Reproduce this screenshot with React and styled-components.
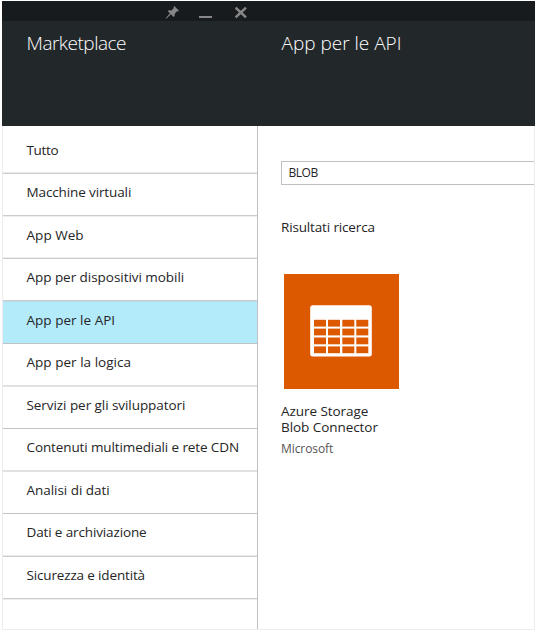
import React from 'react';
import styled, { createGlobalStyle } from 'styled-components';

const GlobalStyle = createGlobalStyle`
  * { box-sizing: border-box; }
  body {
    margin: 0;
    background: #fff;
    color: #252525;
    font-family: "Open Sans", "Noto Sans", sans-serif;
    font-size: 13.5px;
  }
`;

const Page = styled.div`
  width: 537px;
  height: 631px;
  padding: 1px 2px;
  overflow: hidden;
`;

const Blades = styled.div`
  width: 533px;
  height: 629px;
  display: flex;
  flex-direction: column;
`;

const TitleBar = styled.div`
  height: 20px;
  flex: none;
  display: flex;
  align-items: flex-start;
  background: #171b1d;
  padding: 4px 0 0 163px;
`;

const Glyph = styled.svg`
  display: block;
  flex: none;
  width: 15px;
  height: 15px;
  margin-right: ${(p) => p.$gap || 0}px;
  fill: #858788;
`;

const Header = styled.header`
  height: 105px;
  flex: none;
  display: grid;
  grid-template-columns: 255px 1fr;
  background: #22272a;
`;

const Title = styled.h1`
  margin: 0;
  padding: 9px 0 0 24.5px;
  color: #fff;
  font-size: 19px;
  font-weight: 300;
  line-height: 26px;
  letter-spacing: ${(p) => p.$track}px;
  white-space: nowrap;
`;

const Body = styled.div`
  flex: 1;
  display: grid;
  grid-template-columns: 255px 1fr;
  border: solid #ededed;
  border-width: 0 1px 1px;
`;

const Menu = styled.nav`
  border-right: 1px solid #c0c0c2;
`;

const Item = styled.div`
  height: ${(p) => p.$height}px;
  padding: ${(p) => (p.$height > 44 ? 15 : 9)}px 0 0 23.5px;
  line-height: 18px;
  letter-spacing: ${(p) => p.$track}px;
  white-space: nowrap;
  background: ${(p) => (p.$active ? '#b3ebfb' : '#fff')};
  border-bottom: 1px solid ${(p) => p.$line};
  box-shadow: inset 0 -1px ${(p) => p.$soft};
`;

const Results = styled.main`
  padding: 35px 0 0 23px;
`;

const Search = styled.div`
  height: 24px;
  padding-left: 6.5px;
  border: 1px solid #c0c0c0;
  border-right: 0;
  font-size: 12px;
  line-height: 22px;
  letter-spacing: -0.45px;
`;

const Subtitle = styled.h2`
  margin: 33px 0 0;
  font-size: 13.5px;
  font-weight: 400;
  line-height: 18px;
  letter-spacing: -0.15px;
`;

const Card = styled.article`
  margin-top: 38px;
  width: 118px;
`;

const Tile = styled.div`
  width: 115px;
  height: 115px;
  margin-left: 3px;
  display: flex;
  padding: 31px 0 0 26px;
  background: #dd5900;
`;

const Name = styled.div`
  width: 108px;
  margin-top: 14px;
  line-height: 16px;
  letter-spacing: -0.06px;
`;

const Publisher = styled.div`
  margin-top: 6px;
  color: #555;
  font-size: 12px;
  line-height: 16px;
  letter-spacing: -0.08px;
`;

const items = [
  { label: 'Tutto', height: 48, soft: '#ebebeb', line: '#cccccc', track: -0.35 },
  { label: 'Macchine virtuali', height: 43, soft: '#cccccc', line: '#eeeeee', track: -0.12 },
  { label: 'App Web', height: 42, soft: '#eeeeee', line: '#cccccc', track: 0.04 },
  { label: 'App per dispositivi mobili', height: 43, soft: '#cccccc', line: '#b5dce7', track: -0.04 },
  { label: 'App per le API', height: 42, soft: '#b3ebfb', line: '#bfc3c5', track: 0.02, active: true },
  { label: 'App per la logica', height: 43, soft: '#e1e1e1', line: '#e1e1e1', track: 0.03 },
  { label: 'Servizi per gli sviluppatori', height: 42, soft: '#ffffff', line: '#c4c4c4', track: -0.06 },
  { label: 'Contenuti multimediali e rete CDN', height: 43, soft: '#e1e1e1', line: '#e1e1e1', track: -0.11 },
  { label: 'Analisi di dati', height: 42, soft: '#ffffff', line: '#c4c4c4', track: -0.04 },
  { label: 'Dati e archiviazione', height: 43, soft: '#ebebeb', line: '#cccccc', track: -0.13 },
  { label: 'Sicurezza e identità', height: 43, soft: '#cccccc', line: '#eeeeee', track: -0.15 },
];

const columns = [4, 18, 32.3, 46.3];
const rows = [14.8, 23.6, 32.5, 41.4];

function TableIcon() {
  return (
    <svg width="62" height="52" viewBox="0 0 62 52">
      <rect x="0.2" y="0.2" width="61.6" height="51.4" rx="2.5" fill="#fff" />
      {rows.map((y) =>
        columns.map((x) => (
          <rect key={`${x}-${y}`} x={x} y={y} width="12" height="6.8" fill="#dd5900" />
        ))
      )}
    </svg>
  );
}

export default function App() {
  return (
    <>
      <GlobalStyle />
      <Page>
        <Blades>
          <TitleBar>
            <Glyph viewBox="0 0 15 15" $gap={19}>
              <path d="M9.3 1 L14 5.7 L12.9 6.5 L12 6.2 L9.7 8.7 L9.6 11.3 L8.7 12 L5.9 9.2 L1.8 13.3 L0.8 13.7 L1.1 12.7 L4.9 8.3 L2.8 6.2 L3.7 5.3 L6.4 5.4 L8.9 3.1 L8.5 2 Z" />
            </Glyph>
            <Glyph viewBox="0 0 15 15" $gap={19}>
              <rect x="0" y="11" width="13" height="2" />
            </Glyph>
            <Glyph viewBox="0 0 15 15">
              <path d="M3.4 1.8 L7.8 5.8 L12.2 1.8 L13.8 3.4 L9.7 7.5 L13.8 11.6 L12.2 13.2 L7.8 9.2 L3.4 13.2 L1.8 11.6 L5.9 7.5 L1.8 3.4 Z" />
            </Glyph>
          </TitleBar>
          <Header>
            <Title $track={-0.5}>Marketplace</Title>
            <Title $track={0}>App per le API</Title>
          </Header>
          <Body>
            <Menu>
              {items.map((item) => (
                <Item
                  key={item.label}
                  $height={item.height}
                  $soft={item.soft}
                  $line={item.line}
                  $track={item.track}
                  $active={item.active}
                >
                  {item.label}
                </Item>
              ))}
            </Menu>
            <Results>
              <Search>BLOB</Search>
              <Subtitle>Risultati ricerca</Subtitle>
              <Card>
                <Tile>
                  <TableIcon />
                </Tile>
                <Name>Azure Storage Blob Connector</Name>
                <Publisher>Microsoft</Publisher>
              </Card>
            </Results>
          </Body>
        </Blades>
      </Page>
    </>
  );
}
